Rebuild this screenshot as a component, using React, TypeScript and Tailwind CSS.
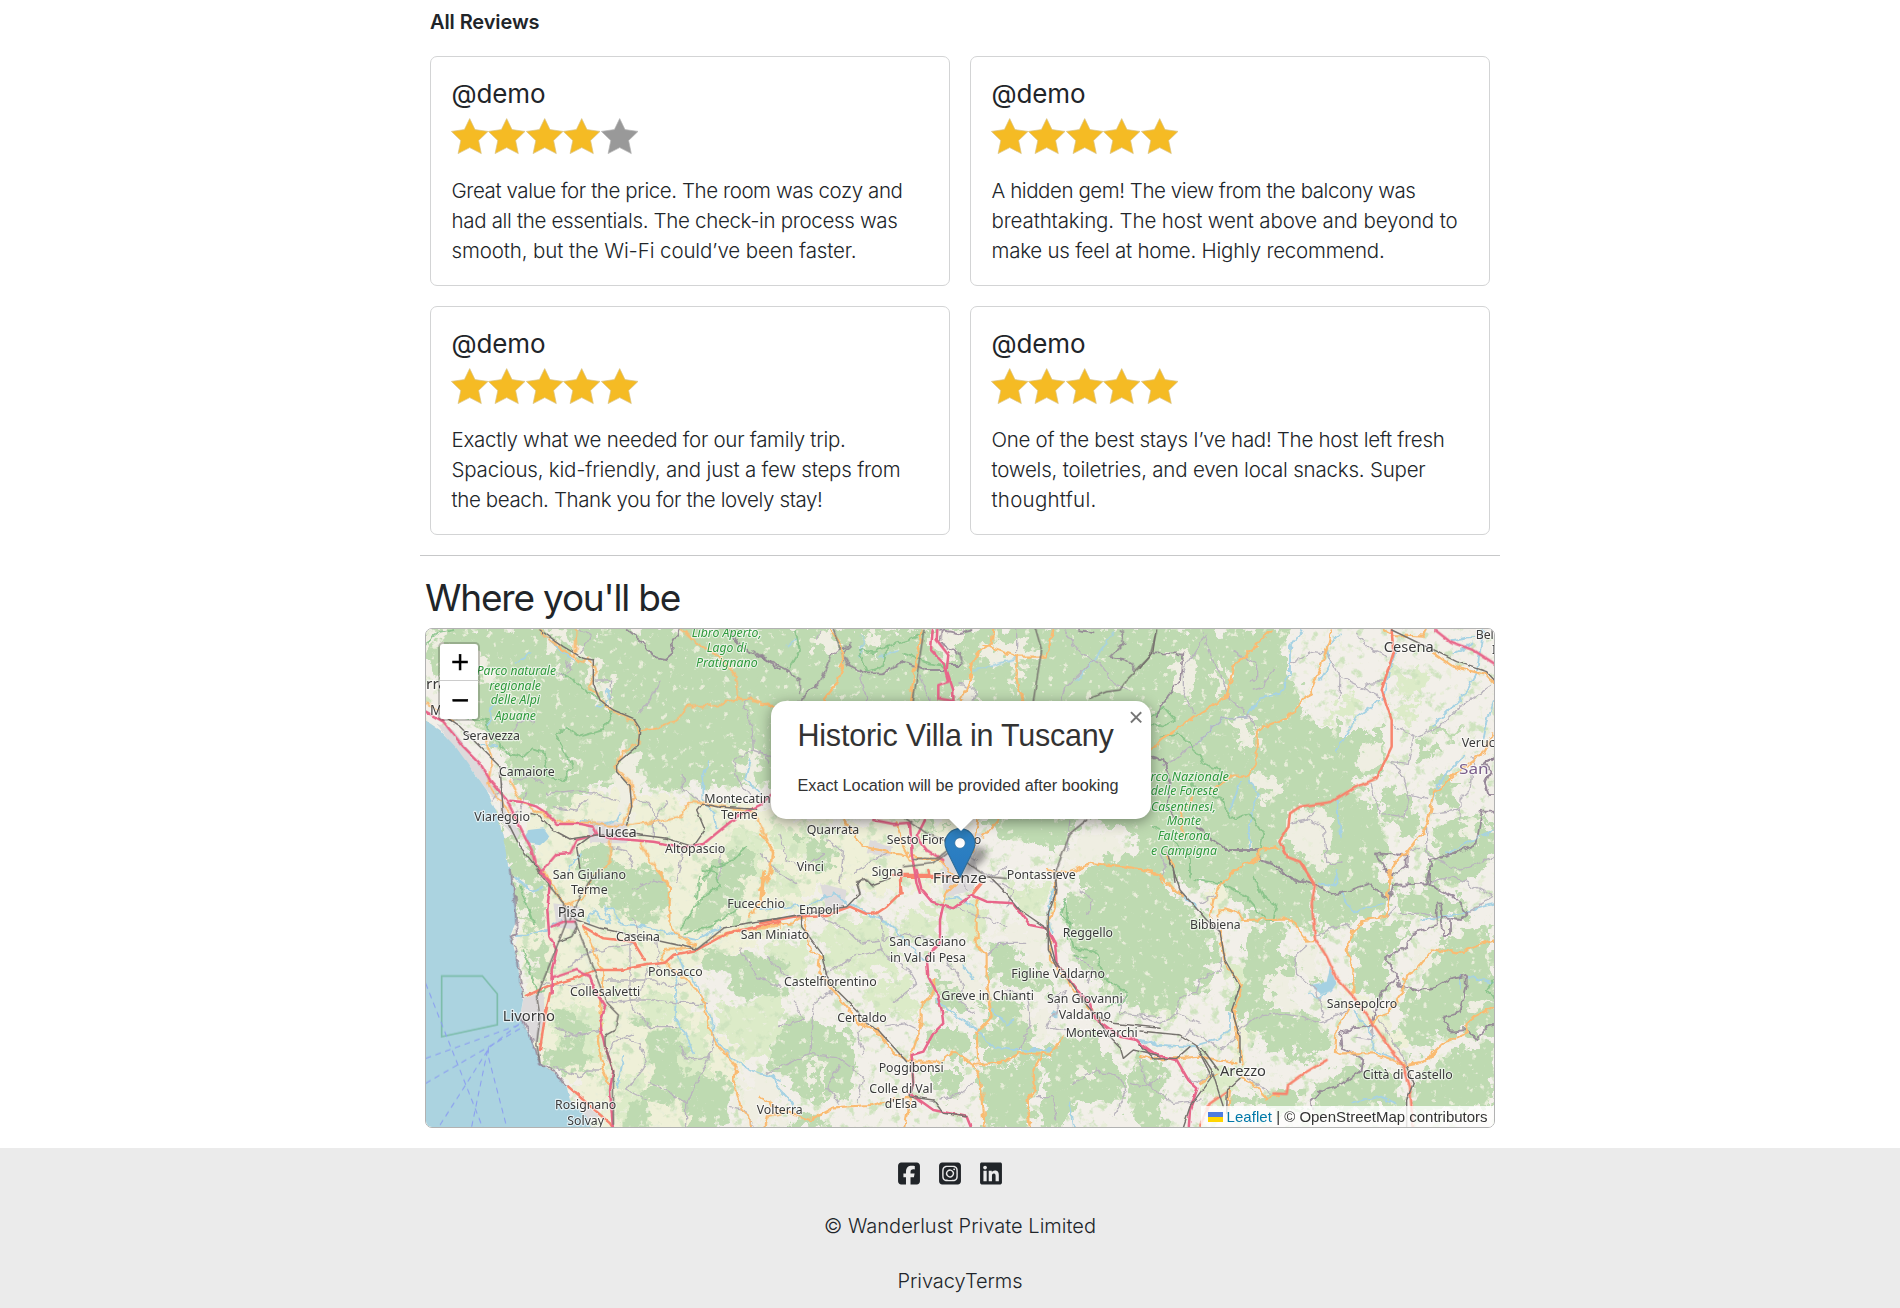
import { useLayoutEffect, useRef, useState } from "react";
import { FaSquareFacebook, FaSquareInstagram, FaLinkedin } from "react-icons/fa6";

/* ---------- text helper: tracks a single line out to a given measure ---------- */
function Line({ text, width }: { text: string; width: number }) {
  const ref = useRef<HTMLSpanElement>(null);
  const [spacing, setSpacing] = useState(0);
  useLayoutEffect(() => {
    if (!ref.current) return;
    const natural = ref.current.getBoundingClientRect().width;
    setSpacing((width - natural) / text.length);
  }, [text, width]);
  return (
    <span ref={ref} className="inline-block whitespace-pre" style={{ letterSpacing: spacing }}>
      {text}
    </span>
  );
}

/* ---------- reviews ---------- */
type Review = { stars: number; lines: [string, number][] };

const reviews: Review[] = [
  {
    stars: 4,
    lines: [
      ["Great value for the price. The room was cozy and", 451],
      ["had all the essentials. The check-in process was", 446],
      ["smooth, but the Wi-Fi could’ve been faster.", 405],
    ],
  },
  {
    stars: 5,
    lines: [
      ["A hidden gem! The view from the balcony was", 424],
      ["breathtaking. The host went above and beyond to", 466],
      ["make us feel at home. Highly recommend.", 393],
    ],
  },
  {
    stars: 5,
    lines: [
      ["Exactly what we needed for our family trip.", 394],
      ["Spacious, kid-friendly, and just a few steps from", 449],
      ["the beach. Thank you for the lovely stay!", 371],
    ],
  },
  {
    stars: 5,
    lines: [
      ["One of the best stays I’ve had! The host left fresh", 453],
      ["towels, toiletries, and even local snacks. Super", 434],
      ["thoughtful.", 105],
    ],
  },
];

function Star({ on }: { on: boolean }) {
  return (
    <svg className="h-10 w-[37.5px] shrink-0" viewBox="0 0 37.5 40">
      <path
        d="M18.7 2.6 24 13.6 37 15.4 27.6 24.5 30.3 37.6 18.7 31.6 7.1 37.6 9.8 24.5 0.4 15.4 13.4 13.6Z"
        fill={on ? "#f5bb24" : "#999999"}
        stroke={on ? "#d8c387" : "#b5b5b5"}
        strokeWidth="0.7"
        strokeLinejoin="round"
      />
    </svg>
  );
}

function ReviewCard({ review, tight }: { review: Review; tight: boolean }) {
  return (
    <article className="rounded-[7px] border border-[#d3d4d5] bg-white px-[20.5px] pt-[21px]">
      <h5 className="h-[30px] text-[26px] leading-[31px] font-normal">
        <Line text="@demo" width={94} />
      </h5>
      <div className="mt-2 -ml-px flex h-10">
        {[1, 2, 3, 4, 5].map((n) => (
          <Star key={n} on={n <= review.stars} />
        ))}
      </div>
      <p className={tight ? "mt-[19px] text-[20.5px] leading-[30px] font-[340]" : "mt-[20px] text-[20.5px] leading-[30px] font-[340]"}>
        {review.lines.map(([t, w]) => (
          <span key={t} className="block h-[30px]">
            <Line text={t} width={w} />
          </span>
        ))}
      </p>
    </article>
  );
}

/* ---------- map data: six sheets, three units per screen pixel ---------- */
type Label = [string, number, number, number, ("b" | "p" | "c")?];
type Sheet = {
  x: number;
  y: number;
  farm?: string[];
  scrub?: string[];
  wood: string[];
  clear?: string[];
  urban?: string[];
  sea?: string[];
  lake?: string[];
  river?: string[];
  minor?: string[];
  park?: string[];
  border?: string[];
  primary?: string[];
  trunk?: string[];
  motorway?: string[];
  rail?: string[];
  labels: Label[];
};

const sheets: Sheet[] = [
  {
    x: 420,
    y: 620,
    farm: ["300,600 420,540 620,500 800,540 1080,560 1080,790 380,790 340,700"],
    wood: [
      "0,20 1090,20 1090,500 960,500 860,490 760,515 640,480 570,480 500,510 420,560 330,560 280,490 240,400 200,340 150,290 90,260 60,150 0,100",
      "235,600 270,640 340,720 380,790 270,790",
      "500,690 560,665 570,730 660,740 660,790 480,790 480,720",
      "860,740 960,680 1010,720 1000,790 860,790",
    ],
    scrub: ["60,60 180,60 240,120 180,170 110,120", "700,440 800,440 820,500 700,510", "930,620 1030,640 1040,780 920,720"],
    clear: [
      "370,20 410,30 500,105 530,115 540,220 580,255 560,265 500,200 505,130 440,110",
      "540,160 580,180 570,240 540,230",
      "600,400 650,375 670,420 650,560 600,600 590,470",
      "20,30 90,30 70,70 17,90",
      "120,90 190,100 230,190 180,180",
      "430,410 480,420 460,470",
      "940,420 1010,400 1020,490 960,490",
      "390,150 430,140 430,180",
    ],
    urban: ["50,310 100,330 170,420 240,540 215,530 150,440 100,380", "500,600 620,610 620,670 510,670", "240,540 300,640 290,660 240,600"],
    sea: ["0,290 60,330 110,385 150,440 200,510 235,590 255,680 272,790 0,790"],
    lake: ["312,650 325,630 370,625 388,650 360,676 325,670"],
    river: [
      "870,420 850,470 850,540 880,580 890,630",
      "990,420 975,480 1020,520",
      "480,600 540,615 590,600 600,580",
      "205,330 215,260 240,240",
      "290,130 330,100",
      "560,210 570,240 530,265",
      "180,370 230,380",
      "480,700 450,740 440,780",
      "370,40 420,90 460,120",
    ],
    minor: [
      "720,180 690,240 655,280",
      "380,520 480,510 520,520 600,545",
      "635,540 680,545 740,640",
      "790,465 790,510 840,545",
      "990,230 970,260 995,310 1000,390 940,420 955,480 990,520",
      "530,180 575,180 570,240",
      "410,170 450,150 440,120",
      "480,30 510,50 480,100",
      "370,490 330,470 280,480",
      "500,540 470,570 400,560",
      "740,545 700,600 700,655",
      "570,680 620,690 640,740",
      "790,690 770,790",
      "320,520 300,570 260,590",
      "250,490 220,540",
      "900,680 900,780",
      "280,330 320,290 340,310",
      "1000,390 1060,410 1080,440",
    ],
    park: [
      "430,160 470,190 540,240 580,280 550,330 480,350 440,320 405,345 430,380 455,440 430,480 380,470 375,400 330,390 310,412 260,400 235,370 210,340 200,300 120,290",
      "17,70 60,40 100,30",
      "850,780 880,740 940,720 980,680",
    ],
    border: ["620,30 670,70 700,110 740,118 760,100 755,70 780,30", "930,30 960,80 1000,100 1030,115 1080,150"],
    primary: [
      "360,30 390,60 460,110 480,130 505,115 525,150 510,200 560,260 640,305 660,340 655,370 610,395 585,445 630,485 640,540 610,610",
      "470,30 465,110",
      "785,30 830,70 900,110 950,170 950,235 1000,240 1080,265",
      "950,235 900,255 800,260 770,300 720,320 665,330",
      "200,350 215,420 205,490 230,530 290,600",
      "270,480 300,540 380,590 420,605 510,608 590,620 700,605 780,590 810,545 850,550 1000,575 1030,640 1060,700 1040,790",
      "570,660 570,720 545,750",
      "660,665 690,720 740,790",
      "17,250 60,275 100,300",
    ],
    motorway: [
      "0,265 70,305 130,380 180,430 210,480 260,540 300,620 335,690 345,730 390,790",
      "270,542 300,545 350,560 380,580 410,612 480,612 520,620 530,640",
      "365,755 410,702 450,700 470,660 530,642 570,655 700,665 790,682 850,672 950,590 1020,555 1080,500",
    ],
    rail: [
      "360,30 430,80 490,115 520,120 520,190 540,240 580,270 640,295 660,325 655,375 590,430 590,455 630,500 635,560 620,615",
      "60,280 120,320 240,440 250,580 300,680 360,755",
      "330,580 360,590 400,630 450,657 530,645 620,640 740,655 820,680 855,630 830,570 845,550 900,562 1010,568",
      "510,650 470,680 480,745",
    ],
    labels: [
      ["Carrara", -36, 207, 160, "b"],
      ["Massa", 30, 284, 122, "b"],
      ["Seravezza", 128, 361, 172],
      ["Camaiore", 237, 468, 167],
      ["Viareggio", 163, 602, 167],
      ["Lucca", 533, 651, 117, "b"],
      ["Altopascio", 735, 700, 181],
      ["Montecatini", 853, 548, 209],
      ["Terme", 903, 596, 110],
      ["San Giuliano", 398, 777, 220],
      ["Parco naturale", 170, 165, 238, "p"],
      ["regionale", 208, 209, 155, "p"],
      ["delle Alpi", 212, 253, 148, "p"],
      ["Apuane", 224, 300, 124, "p"],
      ["Libro Aperto,", 815, 50, 210, "p"],
      ["Lago di", 860, 95, 120, "p"],
      ["Pratignano", 828, 140, 185, "p"],
    ],
  },
  {
    x: 420,
    y: 870,
    farm: ["270,0 1090,0 1090,200 900,240 820,340 860,440 960,560 960,640 800,790 560,790 430,600 360,560 310,300"],
    scrub: [
      "640,390 760,380 830,430 700,470",
      "880,420 1080,360 1080,560 960,560",
      "380,420 540,400 560,600 420,590",
      "700,480 870,460 880,600 820,640 720,650",
      "580,620 680,620 700,780 600,770",
    ],
    wood: [
      "272,0 330,10 372,40 370,180 300,185 282,90",
      "325,230 390,200 382,330 350,350 320,310",
      "500,30 640,0 720,0 745,60 740,120 640,150 600,110 540,90",
      "780,180 850,80 850,-10 1000,-10 960,110 860,180 800,195",
      "400,400 480,430 530,490 470,520 400,470",
      "370,540 480,510 520,560 500,610 430,600 370,580",
      "680,490 760,475 790,560 760,660 700,640",
      "860,235 1090,260 1090,380 960,370 880,290",
      "800,600 920,620 940,700 890,790 800,790 790,710 700,700 680,790 600,790 620,710 740,640",
      "640,450 690,430 700,480",
    ],
    clear: ["290,100 340,110 330,150 300,140", "330,260 350,270 340,310", "960,640 1080,620 1080,770 960,770", "280,20 320,40 340,60 310,60"],
    urban: ["310,390 370,360 375,450 350,520 330,490 300,440", "400,100 480,110 470,180 410,170", "480,690 540,740 500,760"],
    sea: [
      "0,-10 270,-10 285,80 290,150 272,195 290,260 300,330 310,385 300,440 335,510 360,580 400,605 440,650 450,690 500,740 520,790 0,790",
    ],
    river: [
      "280,20 340,65 370,50",
      "290,195 340,190 380,180 400,160 430,150",
      "500,160 520,115 545,150 570,160 555,115 580,115 600,160 640,165 720,180 780,200 830,210 900,170",
      "770,240 790,300 830,340 850,400 880,450 880,500 930,560 990,600 1080,630",
      "770,320 765,440 800,500 820,550",
      "610,560 600,620 590,650",
    ],
    minor: [
      "370,340 450,350 520,340",
      "440,290 500,250 560,235 640,220",
      "550,330 700,330 740,350 800,340",
      "630,220 630,400 690,470 780,470",
      "560,400 640,390 700,390 780,400 860,400",
      "590,500 660,520 680,580 620,660 680,690",
      "780,530 800,570 870,560 880,490",
      "690,640 740,660 800,700 840,620 870,550",
      "960,240 1010,320 1080,350",
      "400,470 470,500 540,480",
      "400,590 480,620 500,600 550,600",
      "640,150 660,200",
      "710,210 720,300",
      "600,400 660,380 680,300",
      "800,700 800,790",
      "560,570 580,520 640,490",
      "640,60 700,30 740,40",
      "930,710 980,720 1000,770",
      "420,470 440,500 500,490",
    ],
    park: ["780,180 820,120 850,80 900,50 890,10 850,0", "840,20 830,90", "960,110 870,170 790,190", "310,240 330,300 350,370 385,350", "300,50 340,160"],
    primary: [
      "370,0 400,50 430,100",
      "715,0 750,50 748,150 765,190 830,230 740,240 725,270 800,330 845,380 870,480 890,525 950,590 940,650 965,710 990,740 995,790",
      "490,170 550,310 540,400 545,470 533,510 550,600 570,650",
      "1035,0 1025,90 990,140",
      "430,110 480,90 520,20 530,0",
      "880,200 960,180 1080,170",
      "1030,790 1040,740 1080,730",
    ],
    trunk: [
      "320,378 380,350 480,320 530,300 600,300 680,285 735,278 760,255 830,240 920,190 1080,155",
      "490,170 550,205 640,215 675,272",
      "390,370 375,440 360,540",
      "445,650 490,690 570,760 590,790",
    ],
    motorway: [
      "355,0 390,35 382,120 388,200 410,240 395,300 395,370",
      "395,170 430,155 465,155",
      "395,325 470,300 510,320 530,370 555,410 540,460 555,530 580,600 570,660 580,790",
    ],
    rail: [
      "350,0 430,100 438,160 410,230 350,380 360,440 350,520 360,580",
      "430,110 470,150 540,175 660,200 830,238 910,175 1000,155 1080,145",
      "465,155 560,400 595,435 585,480 555,497 555,530 580,600 580,760",
      "470,170 455,200 415,215",
      "450,150 490,60 520,20",
    ],
    border: ["272,0 285,90 290,190 272,195 292,260 300,330 312,380", "300,440 335,510 360,580 400,600 440,650"],
    labels: [
      ["Terme", 453, 73, 110],
      ["Pisa", 413, 140, 82, "b"],
      ["Cascina", 588, 213, 132],
      ["Ponsacco", 684, 317, 164],
      ["Collesalvetti", 450, 379, 211],
      ["Livorno", 248, 452, 157, "b"],
      ["Rosignano", 405, 718, 184],
      ["Solvay", 442, 765, 110],
      ["Fucecchio", 922, 114, 173],
      ["San Miniato", 962, 207, 206],
      ["Volterra", 1010, 733, 138],
    ],
  },
  {
    x: 760,
    y: 620,
    farm: ["120,600 620,600 640,700 500,810 0,810 0,560"],
    scrub: ["120,30 230,30 240,80 150,60", "640,30 840,30 840,100 700,80", "500,30 620,30 620,240 500,240", "0,640 120,620 120,720"],
    wood: [
      "-10,20 1210,20 1210,640 1150,640 960,600 0,500",
      "660,600 960,600 900,690 830,690 720,640",
      "960,760 1210,640 1210,820 960,820",
      "110,660 180,640 240,720 180,760",
      "400,590 500,590 560,640 480,610",
    ],
    clear: [
      "150,40 220,30 240,90 180,100",
      "480,30 600,30 600,100 560,110 500,80",
      "300,40 360,30 340,100",
      "650,80 720,60 850,80 840,130 690,130",
      "600,180 650,200 640,243 590,243",
      "960,640 1080,640 1090,700 1000,740 900,750 920,700",
      "760,100 790,160 770,220",
    ],
    urban: ["540,700 640,700 660,780 560,800", "330,660 400,680 390,710 320,700", "630,640 670,640 640,720 600,730"],
    river: ["640,150 700,135 770,115", "1060,40 1000,120 950,180", "310,50 300,110", "80,80 110,60", "360,110 410,90"],
    minor: [
      "910,30 960,100 1020,130 1060,190 1110,210",
      "1000,120 920,200 905,240",
      "770,30 770,100",
      "300,160 320,240",
      "480,165 510,240",
      "600,190 650,210 640,243",
      "180,30 170,60",
      "60,640 80,720 130,740 190,700",
      "200,660 250,700 240,790",
      "660,750 700,770 740,740",
      "0,700 60,760 110,790",
      "280,760 340,720 380,700",
      "590,640 600,700 650,720",
      "0,390 30,430",
      "930,600 920,690",
    ],
    park: ["105,30 120,90 85,145", "300,100 320,155 370,140 380,80 450,60 490,40", "300,90 340,100 380,80", "430,100 510,130 560,140"],
    border: [
      "270,75 240,85 210,110 200,150 175,190 140,215 122,243",
      "-20,90 20,120 80,150 120,180 120,220",
      "270,80 245,100 265,135 320,160 370,160 430,125 500,150 560,150",
      "545,30 540,70 600,100 610,135 570,135",
      "1085,30 1090,70 1050,110 1100,120 1125,150",
      "540,30 600,40 640,30",
      "960,30 1000,40",
    ],
    primary: [
      "215,30 245,80 250,130 230,190 190,243",
      "485,30 465,150 450,243",
      "700,30 695,70 650,100 630,150 630,190 600,243",
      "880,30 860,110 770,110 700,85 670,75",
      "770,110 770,180 790,243",
      "250,600 310,680 400,700 540,720 600,780",
      "0,640 40,690 35,750 0,810",
      "860,750 920,760 1000,730 1100,740 1200,760",
      "655,600 640,690 600,720",
      "410,610 430,680 470,760",
      "715,600 670,650",
      "0,255 40,258",
    ],
    motorway: [
      "518,30 513,90 550,130 565,185 535,195 535,235 580,243",
      "532,30 530,60 565,105 560,150 580,210 580,243",
      "340,600 400,612 450,608 455,700 470,790 480,820",
      "495,600 470,650 500,690 550,720",
    ],
    trunk: ["430,770 520,770", "420,780 425,820"],
    rail: [
      "492,30 475,140 460,243",
      "825,20 845,90 835,150 820,243",
      "430,590 500,640 550,660",
      "460,715 530,715 560,690",
      "610,720 680,770 740,775",
      "1190,30 1170,110 1100,180 1080,210 1040,215 990,235",
      "980,600 930,640 900,720 885,760 890,820",
      "430,740 520,730 560,700",
      "220,30 240,85",
      "300,820 290,785 320,780 340,800",
    ],
    labels: [
      ["Quarrata", 140, 643, 158],
      ["Sesto Fiorentino", 380, 671, 284],
      ["Vinci", 110, 753, 82],
      ["Signa", 335, 767, 95],
      ["Pontassieve", 740, 778, 207],
      ["Firenze", 518, 789, 162, "b"],
    ],
  },
  {
    x: 760,
    y: 870,
    farm: ["0,60 240,90 240,130 0,130"],
    scrub: [
      "20,0 110,0 110,80 40,60",
      "180,150 380,150 420,300 300,310 200,290",
      "420,120 540,130 520,220 420,200",
      "40,180 120,220 150,320 20,320",
      "320,340 440,320 480,440 330,430",
      "560,60 700,120 660,220 560,180",
      "740,40 880,50 860,160 780,120",
    ],
    wood: [
      "915,90 960,50 1000,60 1010,0 1210,-10 1210,430 1100,400 1000,320 930,240",
      "700,210 780,270 860,320 880,360 790,350 740,350 690,290",
      "700,380 800,400 820,450 800,520 880,540 840,570 660,580 660,500 690,440",
      "510,490 600,470 640,520 620,580 560,540 500,550",
      "660,590 850,570 820,660 810,790 680,790 650,640",
      "860,560 910,500 1000,490 1040,560 1100,610 1080,690 930,710 900,790 840,790",
      "1110,600 1210,590 1210,790 1140,790 1100,700",
      "60,470 150,440 280,500 280,640 240,700 130,680 20,600",
      "490,330 620,310 690,400 600,430 550,420",
      "500,600 620,600 600,690 540,670",
      "70,740 200,740 200,770 80,770",
      "920,610 900,680 860,700",
    ],
    clear: [
      "560,230 640,300 680,380 640,420 580,340",
      "720,150 840,170 880,300 860,320 740,220",
      "150,560 160,640 190,680 170,560",
      "780,420 860,420 890,500 830,500",
      "960,600 1010,590 1000,640",
    ],
    urban: ["540,0 660,0 640,60 560,80", "180,40 260,60 250,120 200,120"],
    lake: ["875,430 882,420 892,425 892,445 880,445"],
    river: [
      "0,120 100,110 160,100 220,70 260,100",
      "270,100 340,140 400,170 440,220 490,270",
      "530,390 580,430 640,470 700,530 760,540 870,540",
      "700,420 740,470 760,450",
      "0,610 40,620 60,660 90,690 120,740",
      "930,700 940,790",
      "610,290 640,330",
      "880,60 865,120 875,190",
      "550,90 590,80 640,110",
      "1130,510 1200,530",
    ],
    minor: [
      "180,140 260,180 300,220 360,210 370,250 440,300",
      "360,130 370,210 430,190 520,210",
      "200,310 280,260 370,240",
      "220,360 160,400 150,550 20,610",
      "150,550 230,560 310,620 290,700",
      "380,470 440,460 480,480",
      "310,550 290,490 310,470",
      "560,270 610,340 600,400 640,430",
      "680,260 720,220 800,220",
      "740,360 800,380 810,460 780,540",
      "600,0 620,60",
      "560,110 610,120 690,150 740,170",
      "940,640 1010,600 1080,620 1100,660 1060,740",
      "640,640 600,670 540,690",
      "690,30 760,60 740,110",
      "960,60 1000,90 980,130",
      "940,260 1000,290 980,340",
      "870,390 920,360 860,470 920,480",
      "1090,380 1080,430 1200,440",
      "20,260 60,300 90,320",
      "240,700 200,650 240,590",
      "830,680 880,680 890,750",
      "440,290 470,340 400,400",
      "1110,640 1160,650 1200,620",
      "100,390 130,450 60,470",
    ],
    park: ["915,100 940,230 1010,250 1030,320 1100,370 1090,400 1040,410", "920,90 900,130 930,160 920,210", "940,260 980,260"],
    primary: [
      "0,170 100,160 130,140 150,240 180,260 175,300 210,350 270,420 300,460 350,480 400,550 450,575 540,575 580,545 640,585 730,575 780,550 870,550 910,505",
      "650,90 650,230 680,250 680,330 695,440 650,490 655,575",
      "640,585 665,640 675,790",
      "850,545 820,600 825,660 800,690 815,790",
      "520,330 520,380 485,400 485,460 450,570",
      "885,0 885,110 865,170 870,270 960,380 1020,450",
      "0,680 60,720 150,750 220,712 330,705 450,680",
      "450,680 430,790",
      "0,100 10,0",
      "600,30 555,70 550,100",
    ],
    trunk: ["0,160 100,140 200,135 270,110 320,132 350,130 380,110 420,70 425,0", "400,15 520,15 580,20", "505,0 510,20", "640,70 665,40"],
    motorway: [
      "470,0 485,60 515,95 580,115 635,75 680,95 760,100 810,165 860,175 885,220 890,280 950,360 990,400 1000,440 1080,500 1130,510 1170,550 1200,560",
      "550,105 540,150 540,220 500,260 505,320 530,370 545,420 550,460 520,490 490,545 455,555 460,640 450,670 520,720 620,740 640,790",
    ],
    rail: [
      "0,155 110,135 260,110 300,70 290,40 310,25 335,45 390,25",
      "125,140 125,170 185,250 200,320 220,350 290,420 320,460 350,475 440,575",
      "690,20 720,50 780,120 860,175 885,270 960,380 1010,440 1060,460 1200,475",
      "885,0 890,60 865,130 865,240 890,290",
      "1010,440 1050,500 1080,530 1090,565 1120,540 1200,560",
      "455,575 460,640 450,680 520,690 550,730 620,740",
    ],
    labels: [
      ["Empoli", 117, 132, 120],
      ["San Casciano", 388, 227, 230],
      ["in Val di Pesa", 390, 275, 228],
      ["Castelfiorentino", 72, 347, 278],
      ["Reggello", 908, 201, 151],
      ["Figline Valdarno", 754, 323, 281],
      ["Greve in Chianti", 544, 391, 278],
      ["San Giovanni", 861, 400, 227],
      ["Valdarno", 896, 448, 157],
      ["Montevarchi", 917, 500, 216],
      ["Certaldo", 232, 456, 148],
      ["Poggibonsi", 356, 607, 195],
      ["Colle di Val", 328, 669, 190],
      ["d'Elsa", 374, 715, 98],
    ],
  },
  {
    x: 1140,
    y: 620,
    scrub: ["740,150 860,150 840,240 770,230", "590,250 660,230 640,290 560,310", "760,280 840,240 820,300", "360,30 430,30 430,130 380,130", "190,350 260,360 240,400"],
    wood: [
      "-10,20 430,20 440,130 470,200 490,290 600,330 720,330 740,420 700,480 640,500 700,560 740,660 760,700 700,740 700,790 -10,790",
      "700,540 740,500 810,520 810,570 740,600",
      "870,320 930,320 950,350 880,350",
      "830,360 880,370 870,430 840,410",
      "890,470 960,480 940,560 890,540",
      "880,610 1000,590 1070,590 1070,690 980,790 860,790",
      "760,560 840,590 850,640 790,650",
    ],
    clear: [
      "350,450 430,490 390,540 340,520",
      "460,580 540,550 580,620 600,700 540,740 470,700 440,640",
      "220,140 270,150 250,240",
      "100,100 160,100 140,240 110,200",
      "650,390 710,370 720,430 680,450",
      "960,620 1060,600 1000,660",
      "480,600 560,600 560,700 470,700",
      "280,290 330,295 350,380 320,400",
    ],
    river: [
      "485,30 450,80 450,160 420,220 360,235 320,290",
      "600,40 560,80 570,130 540,180",
      "770,80 740,180 730,240",
      "1030,30 1010,160 960,240 880,315",
      "720,240 650,290 590,395",
      "1063,240 1040,310 1030,360",
      "300,490 270,570",
      "330,480 355,520 330,600 330,690",
      "590,540 600,650",
      "1063,630 920,700",
      "940,60 1000,50",
      "320,290 250,295 170,370",
      "590,760 580,790",
      "940,100 1000,70",
      "970,410 900,480 870,560",
    ],
    minor: [
      "200,40 130,150 130,210 160,280",
      "195,40 210,110 240,160 270,240 330,290 355,330",
      "455,130 520,95 560,100 600,170 660,200 720,230",
      "600,170 597,235",
      "660,205 690,190 740,185",
      "755,315 830,350 900,320 960,260 1050,200",
      "820,350 805,430 755,425",
      "690,490 720,580 790,590 810,540 780,450 750,425",
      "330,290 250,295 170,370 70,440",
      "870,580 960,570",
      "530,570 500,600 450,610",
      "500,600 550,620 560,730 600,730",
      "650,40 680,80 740,110",
      "280,95 350,130 350,170 330,190",
      "400,145 370,200 340,210",
      "800,520 860,535",
      "1000,410 990,510 960,540 960,600",
      "860,620 860,700 960,750 1060,710",
      "60,700 80,740 60,780",
      "840,685 810,690",
    ],
    park: [
      "36,290 70,260 105,300 70,320 36,315",
      "60,350 115,340 160,380 190,430 240,450 240,500",
      "250,540 270,600 330,580 370,640 360,690",
      "150,490 200,520 250,540",
      "36,620 60,630 150,700 150,770",
    ],
    border: [
      "40,100 130,100 120,180 60,260 50,290",
      "36,410 70,420 90,480 80,560 110,600",
      "170,620 220,660 260,690 355,690 360,720 410,735 470,790",
      "1063,575 1025,575 1010,670 970,690 870,720 870,790",
      "705,700 800,705 800,740 750,770 710,705",
      "1062,415 1030,430 1050,460 1035,490 1045,525 1062,525",
      "1062,415 1033,428 1052,462 1038,490 1048,522",
    ],
    primary: [
      "395,30 340,85 280,140 260,230 180,280 110,325 60,360 36,390",
      "575,30 560,90 510,220 440,295 370,320 350,340 350,430 320,470 270,470 220,510",
      "880,100 940,140 1040,165 1063,190",
      "1060,340 1030,400 960,450 880,520 860,620 800,700 760,730 750,790",
      "418,680 360,690 355,715 300,740 250,780",
      "0,750 60,765 70,790",
      "160,530 120,580 130,650",
      "730,30 760,45 850,50 860,30",
      "80,700 100,740",
    ],
    trunk: ["755,30 760,100 725,210 755,300 755,380 710,475 640,505 575,545 480,560 450,580 445,620 418,665 440,710 480,725 520,790"],
    motorway: ["885,30 930,65 1000,90 1070,135"],
    rail: ["755,30 870,85 950,125 1040,155 1063,180", "48,30 38,100 0,145", "80,700 100,745 105,790"],
    labels: [
      ["Cesena", 731, 95, 150, "b"],
      ["Bellaria", 1007, 57, 130],
      ["Igea", 1056, 102, 72],
      ["Verucchio", 965, 381, 172],
      ["San Marino", 957, 462, 276, "c"],
      ["Parco Nazionale", -12, 482, 279, "p"],
      ["delle Foreste", 32, 525, 203, "p"],
      ["Casentinesi,", 33, 572, 195, "p"],
      ["Monte", 80, 616, 103, "p"],
      ["Falterona", 53, 661, 157, "p"],
      ["e Campigna", 33, 706, 198, "p"],
    ],
  },
  {
    x: 1140,
    y: 870,
    farm: ["210,60 270,60 260,130 200,140", "280,450 340,470 320,580 290,580", "620,340 680,380 800,520 790,580 700,480"],
    scrub: ["240,280 340,290 360,370 300,380", "0,380 120,380 100,450 0,430", "180,590 320,600 250,700 200,680"],
    wood: [
      "-10,60 100,70 180,140 210,180 240,270 180,340 120,380 100,430 -10,430",
      "320,200 380,150 440,180 400,240 460,260 460,310 390,320 380,400 450,420 540,460 590,500 540,570 450,560 360,520 310,440 270,420 310,330",
      "120,-10 520,-10 520,190 470,160 400,150 310,130 250,60",
      "540,-10 700,-10 750,40 740,140 670,140 600,160 530,180 530,90",
      "650,190 740,150 810,200 730,270 770,330 720,370 640,350",
      "760,50 860,40 940,80 980,130 900,160 860,140 770,110",
      "900,200 1070,160 1070,470 1000,500 930,480 880,520 820,540 770,520 790,430 830,360 870,260",
      "530,630 660,580 780,610 790,690 760,720 520,720",
      "850,590 1070,500 1070,720 830,720 830,640",
      "280,680 440,660 500,720 280,720",
      "490,310 540,320 530,350",
      "0,570 80,580 60,660 0,640",
    ],
    clear: ["460,240 540,230 540,330 480,310", "388,320 462,308 462,400 390,408", "870,150 900,180 950,160", "840,230 920,240 800,320", "1000,390 1060,400 1000,440"],
    lake: ["570,290 590,340 575,362 545,375 510,345 560,335"],
    river: [
      "100,60 170,110",
      "0,510 60,525 150,530 230,510 270,480 270,430",
      "510,370 540,385 560,370",
      "640,420 700,500 700,540 760,565",
      "600,70 640,125 730,100",
      "1063,100 960,130 850,150",
      "640,700 720,680 770,700",
      "985,320 1063,340",
      "540,40 590,50 590,0",
      "960,315 960,355",
    ],
    minor: [
      "180,100 230,75",
      "245,260 240,300 180,330 170,370 120,380 110,430",
      "300,480 350,440 420,430 480,440 540,460 630,415",
      "500,225 460,260 470,310 530,360 550,440",
      "530,200 560,180 620,160 640,180",
      "0,440 60,460 110,430 180,460",
      "120,510 150,480 200,510 240,540 300,490",
      "0,570 20,640 100,700 180,690",
      "700,420 800,580",
      "780,130 850,130 890,140",
      "980,130 1060,80 940,20 870,40",
      "690,450 700,510 640,500",
      "320,620 390,670",
      "130,620 170,640 220,610",
      "770,110 740,140",
    ],
    park: ["160,30 250,40 320,80 380,150 400,150 410,105 370,80 340,20", "1063,330 1040,360 1063,385"],
    border: [
      "410,0 470,30 530,45 580,75 690,40 745,90 760,45 860,40 940,80 985,130 960,150 905,140",
      "930,150 930,195 910,195 900,100 890,100 890,165 815,190 800,230 735,265 770,320 780,350 830,360 880,355 930,325 980,315 980,350 960,430 910,440 930,485 980,480 1010,510 1040,470 1063,465",
      "770,320 730,360 690,470 640,475 600,490 605,530 670,570 665,600 610,640 550,660 515,690 520,720",
      "870,0 860,40",
      "730,0 760,15",
    ],
    primary: [
      "0,0 60,10 100,60 130,80",
      "298,0 250,30 220,90 210,140",
      "230,140 255,115 300,130 310,150 450,145 500,212 525,210",
      "240,180 255,280 310,350 280,420 305,580",
      "750,0 740,140 670,150 635,190 620,240 640,300 640,370",
      "630,410 590,480 585,550 700,550 800,585 850,575 910,520 980,490 985,450 1063,410",
      "1063,210 950,250 880,235 830,300 790,325 790,360 740,430 690,460",
      "0,555 60,568 180,560 290,580",
      "300,620 350,650 380,685 420,670",
      "270,660 265,720",
      "180,640 230,610",
    ],
    trunk: [
      "495,0 525,45 515,100 525,205 560,260 590,325 640,380 690,450 790,590 810,650 820,790",
      "400,670 440,672 445,645 500,605 560,570",
      "170,790 210,700 260,665",
    ],
    motorway: ["0,520 50,555 110,570 145,630 172,655 150,720 145,790"],
    rail: [
      "0,483 120,495 190,540 235,600",
      "100,0 120,60 200,150 240,185 255,270 300,350 275,420 300,500 300,580",
      "300,625 262,660 260,730",
      "130,770 150,710 215,620 180,550",
      "170,530 215,600 250,710",
      "0,525 40,567 110,565 150,530",
      "800,590 820,640 800,690 800,770",
    ],
    labels: [
      ["Bibbiena", 150, 178, 152],
      ["Sansepolcro", 560, 414, 212],
      ["Arezzo", 240, 617, 138, "b"],
      ["Città di Castello", 668, 626, 270],
    ],
  },
];

const ferries = ["17,340 195,790", "17,565 310,460", "17,640 310,470", "60,765 210,530 300,460", "155,770 205,530", "265,790 205,560 205,530"];

type AreaKey = "farm" | "scrub" | "wood" | "clear" | "urban" | "sea" | "lake";
type WayKey = "river" | "minor" | "park" | "border" | "primary" | "trunk" | "motorway" | "rail";

function Areas({ kind, fill }: { kind: AreaKey; fill: string }) {
  return (
    <>
      {sheets.map((s, i) => (
        <g key={i} transform={`translate(${s.x} ${s.y}) scale(0.33333)`} fill={fill}>
          {(s[kind] ?? []).map((p, j) => (
            <polygon key={j} points={p} />
          ))}
        </g>
      ))}
    </>
  );
}

function Ways({ kind, stroke, width, opacity = 1 }: { kind: WayKey; stroke: string; width: number; opacity?: number }) {
  return (
    <>
      {sheets.map((s, i) => (
        <g
          key={i}
          transform={`translate(${s.x} ${s.y}) scale(0.33333)`}
          fill="none"
          stroke={stroke}
          strokeWidth={width}
          strokeOpacity={opacity}
          strokeLinejoin="round"
          strokeLinecap="round"
        >
          {(s[kind] ?? []).map((p, j) => (
            <polyline key={j} points={p} />
          ))}
        </g>
      ))}
    </>
  );
}

function TerrainMap() {
  const region = { filterUnits: "userSpaceOnUse" as const, x: 400, y: 610, width: 1120, height: 540 };
  return (
    <svg className="block h-full w-full" viewBox="426 629 1068 498" preserveAspectRatio="none">
      <defs>
        <filter id="ragged" {...region} colorInterpolationFilters="sRGB">
          <feTurbulence type="fractalNoise" baseFrequency="0.07" numOctaves="4" seed="4" result="n" />
          <feDisplacementMap in="SourceGraphic" in2="n" scale="34" xChannelSelector="R" yChannelSelector="G" />
        </filter>
        <filter id="winding" {...region} colorInterpolationFilters="sRGB">
          <feTurbulence type="fractalNoise" baseFrequency="0.13" numOctaves="2" seed="9" result="n" />
          <feDisplacementMap in="SourceGraphic" in2="n" scale="7" xChannelSelector="R" yChannelSelector="G" />
        </filter>
        <filter id="gentle" {...region} colorInterpolationFilters="sRGB">
          <feTurbulence type="fractalNoise" baseFrequency="0.1" numOctaves="2" seed="2" result="n" />
          <feDisplacementMap in="SourceGraphic" in2="n" scale="3" xChannelSelector="R" yChannelSelector="G" />
        </filter>
        <filter id="groves" {...region} colorInterpolationFilters="sRGB">
          <feTurbulence type="fractalNoise" baseFrequency="0.09" numOctaves="4" seed="21" />
          <feColorMatrix values="0 0 0 0 0.81  0 0 0 0 0.89  0 0 0 0 0.75  7 0 0 0 -4.1" />
        </filter>
        <filter id="glades" {...region} colorInterpolationFilters="sRGB">
          <feTurbulence type="fractalNoise" baseFrequency="0.13" numOctaves="4" seed="33" />
          <feColorMatrix values="0 0 0 0 0.91  0 0 0 0 0.93  0 0 0 0 0.85  0 8 0 0 -5.15" />
        </filter>
      </defs>

      <rect x="400" y="610" width="1120" height="540" fill="#f2efe9" />
      <g filter="url(#ragged)">
        <Areas kind="farm" fill="#eff0d8" />
        <Areas kind="scrub" fill="#dcebc8" />
      </g>
      <rect x="400" y="610" width="1120" height="540" filter="url(#groves)" />
      <g filter="url(#ragged)">
        <Areas kind="wood" fill="#bedab1" />
        <Areas kind="clear" fill="#efeee2" />
      </g>
      <rect x="400" y="610" width="1120" height="540" filter="url(#glades)" />
      <g filter="url(#gentle)">
        <Areas kind="urban" fill="#dddadb" />
        <Areas kind="sea" fill="#abd3e0" />
        <Areas kind="lake" fill="#a5d1e2" />
      </g>

      <g transform="translate(420 870) scale(0.33333)" fill="none">
        <polygon points="65,318 187,318 232,372 232,464 65,500" stroke="#7dbdab" strokeWidth="5" />
        {ferries.map((p) => (
          <polyline key={p} points={p} stroke="#8c9ff0" strokeWidth="3.2" strokeDasharray="17 14" />
        ))}
      </g>

      <g filter="url(#winding)">
        <Ways kind="river" stroke="#a6d2e3" width={5.5} />
        <Ways kind="minor" stroke="#b9b4bd" width={4} />
        <Ways kind="park" stroke="#7fbf83" width={5.5} opacity={0.8} />
        <Ways kind="border" stroke="#8f7f92" width={5.5} opacity={0.85} />
        <Ways kind="primary" stroke="#fabb72" width={6.5} />
      </g>
      <g filter="url(#gentle)">
        <Ways kind="trunk" stroke="#f8846d" width={7.5} />
        <Ways kind="motorway" stroke="#e8668a" width={7.5} />
        <Ways kind="rail" stroke="#77736f" width={4.4} />
      </g>

      {sheets.map((s, i) => (
        <g
          key={i}
          transform={`translate(${s.x} ${s.y}) scale(0.33333)`}
          fontFamily="'Noto Sans', sans-serif"
          paintOrder="stroke"
          stroke="#ffffff"
          strokeOpacity="0.65"
          strokeWidth="7"
          strokeLinejoin="round"
        >
          {s.labels.map(([t, x, y, w, k]) => (
            <text
              key={t}
              x={x}
              y={y}
              textLength={w}
              lengthAdjust="spacingAndGlyphs"
              fontSize={k === "b" || k === "c" ? 45 : 40}
              fontStyle={k === "p" ? "italic" : "normal"}
              fill={k === "p" ? "#2f9a3d" : k === "c" ? "#7b5f8c" : "#3a3a3a"}
            >
              {t}
            </text>
          ))}
        </g>
      ))}
    </svg>
  );
}

function Marker() {
  return (
    <svg className="absolute top-[199px] left-[518px] h-[52px] w-[60px]" viewBox="0 0 60 52">
      <defs>
        <linearGradient id="pin" x1="0" y1="0" x2="0" y2="1">
          <stop offset="0" stopColor="#2f84c4" />
          <stop offset="1" stopColor="#2778bf" />
        </linearGradient>
        <filter id="soft" x="-30%" y="-30%" width="160%" height="160%">
          <feGaussianBlur stdDeviation="3" />
        </filter>
      </defs>
      <path d="M17 49 27 26C31 18 40 17 42 22 44 27 41 32 34 37Z" fill="#222" opacity="0.42" filter="url(#soft)" />
      <path
        d="M16 0.600C7.400 0.600 1 7.400 1 15.600 1 19.500 3 23.200 4.700 26.400L16 49.200 27.300 26.400C29 23.200 31 19.500 31 15.600 31 7.400 24.600 0.600 16 0.600Z"
        fill="url(#pin)"
        stroke="#2e6c97"
        strokeWidth="1.1"
      />
      <circle cx="16" cy="15" r="5.300" fill="#fff" stroke="#2e6c97" strokeWidth="0.700" />
    </svg>
  );
}

function Popup() {
  return (
    <div className="absolute top-[72px] left-[345px] h-[130px] w-[380px] font-['Liberation_Sans',Arial,sans-serif] text-[#333] drop-shadow-[0_3px_7px_rgba(0,0,0,0.4)]">
      <div className="h-[118px] rounded-[15px] bg-white pt-[16px] pl-[26.5px]">
        <h4 className="h-[36px] text-[30.5px] leading-[37px]">
          <Line text="Historic Villa in Tuscany" width={316} />
        </h4>
        <p className="mt-[21px] text-[16.25px] leading-[22px]">
          <Line text="Exact Location will be provided after booking" width={321} />
        </p>
      </div>
      <svg className="mx-auto block h-[12px] w-[24px]" viewBox="0 0 24 12">
        <path d="M0 0H24L12 12Z" fill="#fff" />
      </svg>
      <span className="absolute top-[1px] right-0 flex h-[30px] w-[30px] items-center justify-center text-[26px] leading-none text-[#757575]">
        ×
      </span>
    </div>
  );
}

function ZoomControl() {
  return (
    <div className="absolute top-[13px] left-[12px] w-[42px] rounded-[5px] border-2 border-black/20 bg-white bg-clip-padding font-['DejaVu_Sans',sans-serif] text-[24px] text-black [-webkit-text-stroke:0.5px_black]">
      <div className="flex h-[37px] items-center justify-center border-b border-[#ccc] pl-[2px] leading-[39px]">+</div>
      <div className="flex h-[38px] items-center justify-center pl-[2px] leading-[38px]">−</div>
    </div>
  );
}

function Attribution() {
  return (
    <div className="absolute right-0 bottom-0 flex h-[21px] items-center bg-white/80 pr-[6.5px] pl-[7px] font-['Liberation_Sans',Arial,sans-serif] text-[15px] leading-[21px] text-[#333]">
      <svg className="mr-[4px] h-[10px] w-[15px]" viewBox="0 0 15 10">
        <path fill="#4c7be1" d="M0 0h15v5H0z" />
        <path fill="#ffd500" d="M0 5h15v5H0z" />
      </svg>
      <span className="text-[#0078a8]">
        <Line text="Leaflet" width={45.5} />
      </span>
      <Line text=" | © OpenStreetMap contributors" width={215.5} />
    </div>
  );
}

export default function App() {
  return (
    <div className="flex h-[1308px] flex-col bg-white font-[Inter,sans-serif] text-[#212529]">
      <main className="ml-[420px] w-[1080px] flex-1">
        <h4 className="ml-2.5 pt-[6.5px] text-[20px] leading-[30px] font-semibold">
          <Line text="All Reviews" width={109.5} />
        </h4>
        <section className="mx-2.5 mt-[19.5px] grid grid-cols-2 grid-rows-[230px_229px] gap-5">
          {reviews.map((r, i) => (
            <ReviewCard key={i} review={r} tight={i > 1} />
          ))}
        </section>
        <hr className="mt-5 border-t border-[#c7c8c9]" />
        <h3 className="mt-[20px] ml-[5px] h-[52px] text-[37px] leading-[43px] font-normal">
          <Line text="Where you'll be" width={255} />
        </h3>
        <div className="relative mx-[5px] h-[500px] overflow-hidden rounded-[7px] border border-[#b2b2b2]">
          <TerrainMap />
          <Marker />
          <Popup />
          <ZoomControl />
          <Attribution />
        </div>
      </main>
      <footer className="flex h-[160px] flex-col items-center bg-[#ebebeb] pt-[12.5px] pl-5">
        <div className="mr-[20px] flex gap-[19px]">
          <FaSquareFacebook className="h-[25px] w-[22px]" />
          <FaSquareInstagram className="h-[25px] w-[22px]" />
          <FaLinkedin className="h-[25px] w-[22px]" />
        </div>
        <p className="mt-[25px] text-[20px] leading-[30px] font-[340]">
          <Line text="© Wanderlust Private Limited" width={272} />
        </p>
        <p className="mt-[25px] text-[20px] leading-[30px] font-[340]">
          <Line text="PrivacyTerms" width={125} />
        </p>
      </footer>
    </div>
  );
}
